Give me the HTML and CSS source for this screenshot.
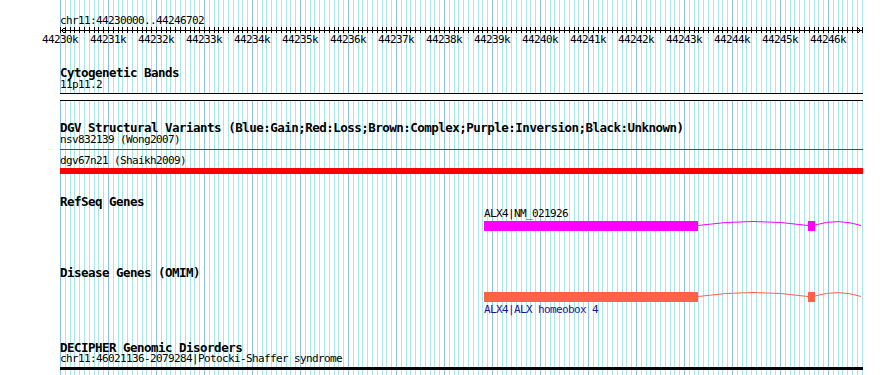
FILE: index.html
```html
<!DOCTYPE html>
<html lang="en">
<head>
    <meta charset="UTF-8">
    <title>chr11:44230000..44246702</title>
    <link rel="stylesheet" href="styles.css">
</head>
<body>
    <div class="canvas">
        <div class="locus">chr11:44230000..44246702</div>

        <svg class="ruler" width="803" height="6">
            <path d="M0 3.5H802 M4.5 1L1 3.5L4.5 6 M797.5 1L801 3.5L797.5 6" stroke="#000" fill="none" shape-rendering="crispEdges"/>
        </svg>
        <div class="tick-labels">
            <span>44230k</span><span>44231k</span><span>44232k</span><span>44233k</span>
            <span>44234k</span><span>44235k</span><span>44236k</span><span>44237k</span>
            <span>44238k</span><span>44239k</span><span>44240k</span><span>44241k</span>
            <span>44242k</span><span>44243k</span><span>44244k</span><span>44245k</span>
            <span>44246k</span>
        </div>

        <section class="track cyto">
            <div class="track-label">Cytogenetic Bands</div>
            <div class="feature-label">11p11.2</div>
            <div class="band"></div>
        </section>

        <section class="track dgv">
            <div class="track-label">DGV Structural Variants (Blue:Gain;Red:Loss;Brown:Complex;Purple:Inversion;Black:Unknown)</div>
            <div class="feature-label">nsv832139 (Wong2007)</div>
            <div class="sv-line"></div>
            <div class="feature-label second">dgv67n21 (Shaikh2009)</div>
            <div class="sv-bar"></div>
        </section>

        <section class="track refseq">
            <div class="track-label">RefSeq Genes</div>
            <div class="feature-label gene-label">ALX4|NM_021926</div>
            <svg class="gene" width="803" height="12">
                <rect x="424" y="1" width="214" height="10" fill="#ff00ff"/>
                <rect x="748" y="1" width="7" height="10" fill="#ff00ff"/>
                <path d="M638 5.5Q693 -2.5 748 5.5 M755 5Q778 -2 801 5.5" stroke="#ff00ff" fill="none"/>
            </svg>
        </section>

        <section class="track disease">
            <div class="track-label">Disease Genes (OMIM)</div>
            <svg class="gene" width="803" height="12">
                <rect x="424" y="1" width="214" height="10" fill="#ff6347"/>
                <rect x="748" y="1" width="7" height="10" fill="#ff6347"/>
                <path d="M638 5.5Q693 -2.5 748 5.5 M755 5Q778 -2 801 5.5" stroke="#ff6347" fill="none"/>
            </svg>
            <div class="feature-label gene-label omim">ALX4|ALX homeobox 4</div>
        </section>

        <section class="track decipher">
            <div class="track-label">DECIPHER Genomic Disorders</div>
            <div class="feature-label">chr11:46021136-2079284|Potocki-Shaffer syndrome</div>
            <div class="decipher-bar"></div>
        </section>
    </div>
</body>
</html>
```

FILE: styles.css
```css
:root {
    --major: #90c0ec;
    --minor: #a8e6ea;
    --mono: "DejaVu Sans Mono", "Liberation Mono", monospace;
}

* {
    margin: 0;
    padding: 0;
    box-sizing: border-box;
}

body {
    background: #fff;
    width: 890px;
    height: 375px;
    overflow: hidden;
    font-family: var(--mono);
    color: #000;
}

/* grid: 10 lines per kb, 48px per kb */
.canvas {
    margin-left: 60px;
    width: 803px;
    height: 375px;
    padding-top: 15px;
    background-image: linear-gradient(to right,
        var(--major) 0 1px, transparent 1px 5px,
        var(--minor) 5px 6px, transparent 6px 10px,
        var(--minor) 10px 11px, transparent 11px 14px,
        var(--minor) 14px 15px, transparent 15px 19px,
        var(--minor) 19px 20px, transparent 20px 24px,
        var(--minor) 24px 25px, transparent 25px 29px,
        var(--minor) 29px 30px, transparent 30px 34px,
        var(--minor) 34px 35px, transparent 35px 38px,
        var(--minor) 38px 39px, transparent 39px 43px,
        var(--minor) 43px 44px, transparent 44px 48px);
    background-size: 48px 100%;
    background-repeat: repeat-x;
}

.locus,
.feature-label,
.tick-labels {
    font-size: 11px;
    letter-spacing: -0.62px;
    line-height: 12px;
    height: 12px;
    white-space: nowrap;
}

.ruler {
    display: block;
    height: 6px;
    background-image: linear-gradient(to right,
        #000 0 1px, transparent 1px 5px,
        #000 5px 6px, transparent 6px 10px,
        #000 10px 11px, transparent 11px 14px,
        #000 14px 15px, transparent 15px 19px,
        #000 19px 20px, transparent 20px 24px,
        #000 24px 25px, transparent 25px 29px,
        #000 29px 30px, transparent 30px 34px,
        #000 34px 35px, transparent 35px 38px,
        #000 38px 39px, transparent 39px 43px,
        #000 43px 44px, transparent 44px 48px);
    background-size: 48px 100%;
    background-repeat: repeat-x;
}

.tick-labels {
    display: flex;
    margin-top: 1px;
    margin-left: -24px;
}

.tick-labels span {
    flex: 0 0 48px;
    text-align: center;
}

.track-label {
    font-size: 12.5px;
    font-weight: bold;
    letter-spacing: -0.52px;
    line-height: 13px;
    height: 13px;
    white-space: nowrap;
}

.cyto {
    margin-top: 20px;
}

.band {
    margin-top: 2px;
    height: 8px;
    background: #fff;
    border-top: 1px solid #000;
    border-bottom: 1px solid #000;
}

.dgv {
    margin-top: 20px;
}

.sv-line {
    margin-top: 3px;
    height: 1px;
    background: #ff0000;
}

.dgv .second {
    margin-top: 5px;
}

.sv-bar {
    margin-top: 1px;
    height: 6px;
    background: #ff0000;
}

.refseq {
    margin-top: 21px;
}

.gene {
    display: block;
}

.gene-label {
    margin-left: 424px;
}

.disease {
    margin-top: 34px;
}

.disease .gene {
    margin-top: 12px;
}

.omim {
    margin-top: 1px;
    color: #1414a0;
}

.decipher {
    margin-top: 25px;
}

.decipher .track-label {
    height: 12px;
}

.decipher-bar {
    margin-top: 2px;
    height: 3px;
    background: #000;
}
```
